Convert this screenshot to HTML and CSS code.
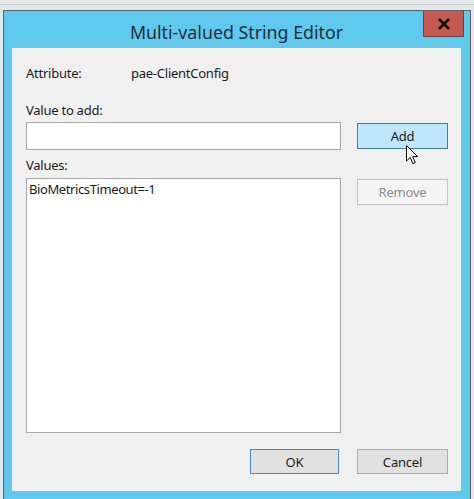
FILE: index.html
```html
<!DOCTYPE html>
<html>
<head>
<meta charset="utf-8">
<link rel="stylesheet" href="styles.css">
</head>
<body>
<div class="screen">
  <div class="window">
    <div class="titlebar">
      <span class="title">Multi-valued String Editor</span>
      <button class="close" aria-label="Close">
        <svg width="14" height="12" viewBox="0 0 14 12"><path d="M2 1 L12 11 M12 1 L2 11" stroke="#111" stroke-width="2.8" stroke-linecap="butt"/></svg>
      </button>
    </div>
    <div class="client">
      <div class="attr-row">
        <span class="attr-label">Attribute:</span>
        <span class="attr-value">pae-ClientConfig</span>
      </div>
      <div class="label add-label">Value to add:</div>
      <div class="edit-grid">
        <input class="textbox" type="text">
        <button class="btn btn-hot">Add</button>
        <div class="label values-label">Values:</div>
        <div></div>
        <div class="listbox"><div class="list-item">BioMetricsTimeout=-1</div></div>
        <button class="btn btn-disabled" disabled>Remove</button>
      </div>
      <div class="footer">
        <button class="btn btn-default">OK</button>
        <button class="btn">Cancel</button>
      </div>
    </div>
  </div>
  <svg class="cursor" width="13" height="20" viewBox="0 0 13 20">
    <path d="M0.5 0.5 L0.5 16 L4.2 12.4 L6.8 18.6 L9.2 17.6 L6.7 11.6 L11.6 11.6 Z" fill="#fff" stroke="#000" stroke-width="1" stroke-linejoin="miter"/>
  </svg>
</div>
</body>
</html>
```

FILE: styles.css
```css
* { box-sizing: border-box; }
html, body { margin: 0; padding: 0; }
body {
  width: 474px;
  height: 499px;
  overflow: hidden;
  background: #e4e9ec;
  font-family: "Noto Sans", "Open Sans", sans-serif;
}
.screen {
  position: relative;
  height: 499px;
  padding-top: 10px;
  background: linear-gradient(#e7ebee 0 4px, #c4ccd0 4px 5px, #e3e8eb 5px);
}
.window {
  margin-left: 3px;
  width: 468px;
  height: 489px;
  border: 1px solid #5c6266;
  border-bottom: 0;
  background: #5fc9ed;
  padding: 0 9px 0 8px;
  overflow: hidden;
}
.titlebar {
  position: relative;
  height: 37px;
  display: flex;
  align-items: center;
  justify-content: center;
}
.title {
  font-size: 17.8px;
  color: #1f2f3a;
  margin-top: 4px;
}
.close {
  position: absolute;
  top: -1px;
  right: -3px;
  width: 41px;
  height: 27px;
  padding: 0;
  border: 1px solid #7d3b35;
  background: #c75a4f;
  display: flex;
  align-items: center;
  justify-content: center;
}
.client {
  height: 443px;
  background: #f0f0f0;
  padding: 17px 13px 0 14px;
  font-size: 13px;
  letter-spacing: -0.25px;
  color: #1b1b1b;
  display: flex;
  flex-direction: column;
}
.attr-row {
  display: flex;
  line-height: 16px;
}
.attr-label { width: 105px; }
.label { line-height: 16px; }
.add-label { margin-top: 21px; }
.edit-grid {
  margin-top: 4px;
  display: grid;
  grid-template-columns: 315px 91px;
  grid-template-rows: 28px 28px 255px;
  column-gap: 16px;
}
.textbox {
  margin: 0;
  height: 28px;
  border: 1px solid #a9a9a9;
  background: #fff;
}
.values-label { align-self: center; padding-top: 2px; }
.listbox {
  border: 1px solid #a9a9a9;
  background: #fff;
  padding: 2px 2px;
}
.list-item {
  line-height: 16px;
  letter-spacing: -0.4px;
}
.btn {
  font-family: inherit;
  font-size: 13px;
  letter-spacing: -0.2px;
  height: 26px;
  margin: 0;
  padding: 0;
  background: #e1e1e1;
  border: 1px solid #adadad;
  color: #1b1b1b;
}
.edit-grid .btn { align-self: start; margin-top: 1px; }
.btn-hot {
  background: #bee6fd;
  border-color: #3c7fb1;
}
.btn-disabled {
  background: #f4f4f4;
  border-color: #c4c4c4;
  color: #8c8c8c;
}
.btn-default {
  border-color: #3c8fd6;
}
.footer {
  margin-top: 16px;
  display: flex;
  justify-content: flex-end;
  gap: 18px;
}
.footer .btn { width: 91px; height: 25px; }
.footer .btn-default { width: 89px; }
.cursor {
  position: absolute;
  left: 406px;
  top: 145px;
}
```
